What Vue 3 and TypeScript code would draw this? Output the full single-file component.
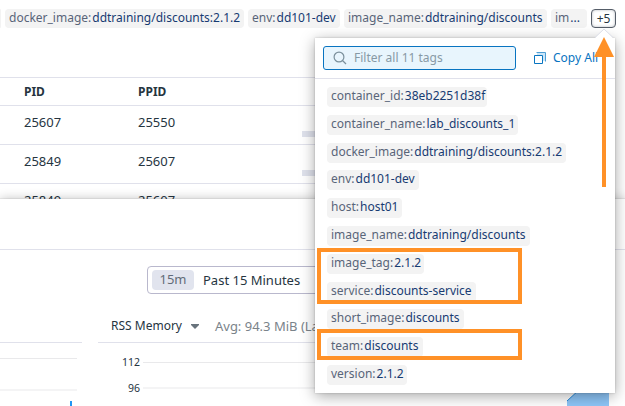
<script setup lang="ts">
interface Tag {
  name: string
  value: string
  width: number
}

const headerTags: Tag[] = [
  { name: 'docker_image:', value: 'ddtraining/discounts:2.1.2', width: 239 },
  { name: 'env:', value: 'dd101-dev', width: 92 },
  { name: 'image_name:', value: 'ddtraining/discounts', width: 203 },
  { name: 'im', value: '...', width: 36 },
]

const tags: Tag[] = [
  { name: 'container_id:', value: '38eb2251d38f', width: 160 },
  { name: 'container_name:', value: 'lab_discounts_1', width: 191 },
  { name: 'docker_image:', value: 'ddtraining/discounts:2.1.2', width: 239 },
  { name: 'env:', value: 'dd101-dev', width: 92 },
  { name: 'host:', value: 'host01', width: 75 },
  { name: 'image_name:', value: 'ddtraining/discounts', width: 203 },
  { name: 'image_tag:', value: '2.1.2', width: 97 },
  { name: 'service:', value: 'discounts-service', width: 149 },
  { name: 'short_image:', value: 'discounts', width: 137 },
  { name: 'team:', value: 'discounts', width: 96 },
  { name: 'version:', value: '2.1.2', width: 80 },
]

const processes = [
  { pid: '25607', ppid: '25550', bar: true },
  { pid: '25849', ppid: '25607', bar: true },
  { pid: '25849', ppid: '25607', bar: false },
]
</script>

<template>
  <main class="page">
    <section class="upper">
      <header class="tag-row">
        <span class="tag stub"></span>
        <span v-for="t in headerTags" :key="t.name" class="tag" :style="{ width: t.width + 'px' }">
          {{ t.name }}<b>{{ t.value }}</b>
        </span>
        <button class="more">+5</button>
      </header>
      <div class="table">
        <div class="row head"><span>PID</span><span>PPID</span></div>
        <div v-for="(p, i) in processes" :key="i" class="row">
          <span>{{ p.pid }}</span><span>{{ p.ppid }}</span><i v-if="p.bar" class="usage"></i>
        </div>
      </div>
    </section>

    <section class="lower">
      <div class="lower-head"></div>
      <div class="range"><span class="badge">15m</span><span>Past 15 Minutes</span></div>
      <div class="charts">
        <div class="chart left">
          <div class="title"></div>
          <svg width="82" height="63" viewBox="0 0 82 63">
            <path d="M0 15.5H77" stroke="#e9e9eb" />
            <path d="M0 47H77" stroke="#f4f4f5" stroke-width="2" />
            <rect x="70" y="58" width="2" height="5" fill="#2196f3" />
          </svg>
        </div>
        <div class="chart right">
          <div class="title">
            <span>RSS Memory</span>
            <svg width="8" height="5" viewBox="0 0 8 5"><path d="M0 0H8V1L4 5L0 1Z" fill="#68737c" /></svg>
            <span class="avg">Avg: 94.3 MiB (Last)</span>
          </div>
          <div class="tick"><span>112</span><i></i></div>
          <div class="tick second"><span>96</span><i></i></div>
        </div>
      </div>
      <svg class="area" width="43" height="17" viewBox="0 0 43 17">
        <path d="M0 12L13 0H42V17H0Z" fill="#8ec6f8" />
        <path d="M0 12L13 0" stroke="#2389dc" fill="none" />
      </svg>
    </section>

    <aside class="popup">
      <svg class="caret" width="18" height="10" viewBox="0 0 18 10">
        <path d="M0 10L9 1L18 10Z" fill="#fff" /><path d="M0 9.5L9 1L18 9.5" fill="none" stroke="#dcdee8" />
      </svg>
      <div class="search-row">
        <div class="search">
          <svg width="14" height="14" viewBox="0 0 14 14" fill="none" stroke="#7b909c" stroke-width="1.2">
            <circle cx="6" cy="6" r="4.9" /><path d="M9.5 9.5L13 13" />
          </svg>
          <span>Filter all 11 tags</span>
        </div>
        <div class="copy">
          <svg width="12" height="12" viewBox="0 0 12 12" fill="none">
            <path d="M3 .5H11.5V9H9V3H3Z" fill="#cce6f8" />
            <path d="M2.5 .5H11.5V9.5" stroke="#4f9fd5" />
            <path d="M.5 3.5H8.5V11.5H.5Z" fill="#fff" stroke="#0875c1" />
          </svg>
          <span>Copy All</span>
        </div>
      </div>
      <ul class="list">
        <li v-for="t in tags" :key="t.name">
          <span class="tag" :style="{ width: t.width + 'px' }">{{ t.name }}<b>{{ t.value }}</b></span>
        </li>
      </ul>
    </aside>

    <div class="mark pair"></div>
    <div class="mark single"></div>
    <svg class="arrow" width="20" height="150" viewBox="0 0 20 150">
      <path d="M10 0L20 20H12V150H8V20H0Z" fill="#ff9127" />
    </svg>
  </main>
</template>

<style>
body {
  background: #fff;
}
</style>

<style scoped>
* {
  box-sizing: border-box;
}
.page {
  position: relative;
  width: 625px;
  height: 406px;
  overflow: hidden;
  background: #fff;
  color: #26353f;
  font: 13px/18px 'Noto Sans', sans-serif;
}
.upper {
  height: 199px;
  overflow: hidden;
}
.tag-row {
  display: flex;
  gap: 4px;
  height: 77px;
  padding-top: 9px;
}
.tag {
  display: block;
  flex: none;
  height: 19px;
  padding-left: 4px;
  border-radius: 4px;
  background: #f3f3f3;
  color: #596579;
  font-size: 12px;
  line-height: 18px;
  white-space: nowrap;
}
.tag b {
  margin-left: 1px;
  color: #173b72;
  font-weight: 400;
}
.tag.stub {
  width: 1px;
  padding: 0;
  border-radius: 0 4px 4px 0;
}
.more {
  width: 25px;
  height: 19px;
  padding: 0;
  border: 1px solid #555d68;
  border-radius: 4px;
  background: #fff;
  box-shadow: inset 0 0 3px #b5b9c0;
  color: #26353f;
  font: 12px/17px 'Noto Sans', sans-serif;
}
.table {
  width: 600px;
}
.row {
  display: flex;
  align-items: center;
  height: 39px;
  padding: 0 0 7px 24px;
  border-bottom: 1px solid #e0e1eb;
}
.row span {
  width: 114px;
}
.row.head {
  height: 29px;
  padding-bottom: 0;
  border-top: 1px solid #e0e1eb;
  font-size: 12px;
  font-weight: 700;
}
.usage {
  width: 40px;
  height: 6px;
  margin: 25px 0 0 50px;
  background: #dfe2ec;
}
.lower {
  position: relative;
  height: 207px;
  background: #fff;
  box-shadow: 0 0 10px rgba(0, 0, 0, 0.25), 0 0 1px rgba(0, 0, 0, 0.3);
}
.lower-head {
  height: 51px;
  border-bottom: 1px solid #e0e1eb;
}
.range {
  display: flex;
  align-items: center;
  gap: 9px;
  width: 240px;
  height: 28px;
  margin: 16px 0 0 147px;
  padding-left: 4px;
  border: 1px solid #b9b8cd;
  border-radius: 4px;
}
.badge {
  width: 42px;
  height: 20px;
  border-radius: 4px;
  background: #e1e4ee;
  color: #626c78;
  line-height: 19px;
  text-align: center;
}
.charts {
  display: flex;
  gap: 16px;
  padding-top: 16px;
}
.chart.left {
  width: 82px;
}
.chart.right {
  width: 480px;
}
.title {
  display: flex;
  align-items: center;
  height: 33px;
  border-bottom: 1px solid #e0e1eb;
  font-size: 12px;
}
.right .title {
  padding-left: 13px;
}
.title svg {
  margin: 0 16px 0 9px;
}
.avg {
  color: #7a838a;
  font-size: 13px;
}
.chart svg {
  display: block;
}
.tick {
  display: flex;
  align-items: center;
  gap: 3px;
  height: 26px;
  margin-top: 6px;
  font-size: 10.5px;
}
.tick.second {
  margin-top: 0;
}
.tick span {
  width: 42px;
  text-align: right;
}
.tick i {
  flex: 1;
  height: 1px;
  background: #e9e9eb;
}
.tick.second i {
  height: 2px;
  background: #f4f4f5;
}
.area {
  position: absolute;
  left: 567px;
  top: 190px;
}
.popup {
  position: absolute;
  left: 315px;
  top: 38px;
  width: 300px;
  height: 355px;
  background: #fff;
  box-shadow: 0 3px 14px rgba(0, 0, 0, 0.35), 0 0 2px rgba(0, 0, 0, 0.2);
}
.caret {
  position: absolute;
  left: 280px;
  top: -10px;
}
.search-row {
  display: flex;
  align-items: center;
  gap: 18px;
  height: 41px;
  padding: 0 0 1px 8px;
  border-bottom: 1px solid #e0e1eb;
}
.search {
  display: flex;
  align-items: center;
  gap: 7px;
  width: 193px;
  height: 24px;
  padding-left: 9px;
  border: 1px solid #0874c1;
  border-radius: 3px;
  background: #e8f5fd;
  color: #8799a5;
  font-size: 12px;
}
.copy {
  display: flex;
  align-items: center;
  gap: 7px;
  color: #0874c1;
  font-size: 12px;
}
.list {
  margin: 0;
  padding: 8px 0 0 12px;
  list-style: none;
}
.list li {
  height: 27.8px;
}
.list .tag {
  height: 20px;
}
.mark {
  position: absolute;
  left: 317px;
  width: 205px;
  border: 4px solid #ff9127;
}
.mark.pair {
  top: 248px;
  height: 56px;
}
.mark.single {
  top: 329px;
  height: 31px;
}
.arrow {
  position: absolute;
  left: 594px;
  top: 37px;
}
</style>
